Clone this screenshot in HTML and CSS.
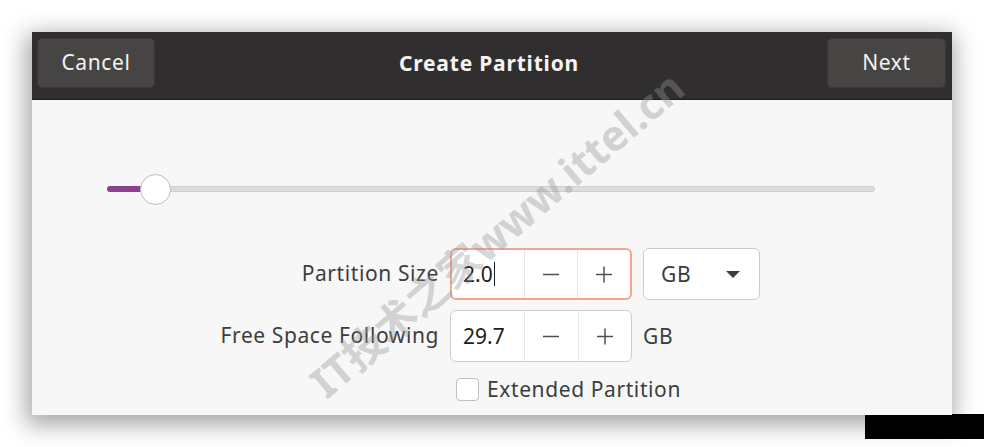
FILE: index.html
```html
<!DOCTYPE html>
<html lang="en">
<head>
    <meta charset="UTF-8">
    <meta name="viewport" content="width=device-width, initial-scale=1.0">
    <title>Create Partition</title>
    <link rel="stylesheet" href="styles.css">
</head>
<body>
    <div class="page">
        <div class="dialog">
            <div class="header">
                <button class="head_btn">Cancel</button>
                <div class="title">Create Partition</div>
                <button class="head_btn next_btn">Next</button>
            </div>
            <div class="content">
                <div class="slider">
                    <div class="track">
                        <div class="fill"></div>
                    </div>
                    <div class="thumb"></div>
                </div>
                <div class="form">
                    <label class="label">Partition Size</label>
                    <div class="spin focused">
                        <div class="spin_entry">2.0<span class="cursor"></span></div>
                        <div class="spin_btn">
                            <svg width="18" height="18" viewBox="0 0 18 18"><path d="M1 9.5h16" stroke="#505050" stroke-width="1.5"/></svg>
                        </div>
                        <div class="spin_btn">
                            <svg width="18" height="18" viewBox="0 0 18 18"><path d="M1 9.5h16M9 1.5v16" stroke="#505050" stroke-width="1.5"/></svg>
                        </div>
                    </div>
                    <div class="combo">
                        <span>GB</span>
                        <span class="arrow"></span>
                    </div>

                    <label class="label">Free Space Following</label>
                    <div class="spin">
                        <div class="spin_entry">29.7</div>
                        <div class="spin_btn">
                            <svg width="18" height="18" viewBox="0 0 18 18"><path d="M1 9.5h16" stroke="#505050" stroke-width="1.5"/></svg>
                        </div>
                        <div class="spin_btn">
                            <svg width="18" height="18" viewBox="0 0 18 18"><path d="M1 9.5h16M9 1.5v16" stroke="#505050" stroke-width="1.5"/></svg>
                        </div>
                    </div>
                    <div class="unit">GB</div>

                    <div></div>
                    <div class="check_row">
                        <span class="checkbox"></span>
                        <span>Extended Partition</span>
                    </div>
                </div>
            </div>
            <div class="watermark">IT技术之家www.ittel.cn</div>
        </div>
        <div class="footer">
            <div class="black_box"></div>
        </div>
    </div>
</body>
</html>
```

FILE: styles.css
```css
body {
    margin: 0;
    background: #ffffff;
    font-family: "Noto Sans", "Open Sans", sans-serif;
}

.page {
    width: 984px;
    height: 447px;
    padding: 32px 0 0 32px;
    box-sizing: border-box;
    overflow: hidden;
}

.dialog {
    position: relative;
    width: 920px;
    height: 383px;
    background: #f7f7f7;
    box-shadow: -2px 6px 22px 4px rgba(0, 0, 0, 0.35);
    overflow: hidden;
}

.header {
    display: flex;
    align-items: flex-start;
    justify-content: space-between;
    height: 67px;
    padding: 6px 6px 0 5px;
    box-sizing: border-box;
    background: #302e2e;
    border-bottom: 1px solid #1f1e1e;
    height: 68px;
}

.head_btn {
    width: 118px;
    height: 50px;
    border: 1px solid #3a3838;
    border-radius: 5px;
    background: #474544;
    color: #f3f2f1;
    font-family: "Noto Sans", sans-serif;
    font-size: 21px;
    letter-spacing: 0.6px;
    padding: 0 0 3px 0;
}

.next_btn {
    width: 119px;
}

.title {
    color: #f6f5f4;
    font-size: 21px;
    font-weight: bold;
    letter-spacing: 0.8px;
    line-height: 50px;
    margin-right: 4px;
    padding-bottom: 3px;
}

.content {
    padding: 74px 0 0 0;
}

.slider {
    position: relative;
    height: 31px;
    margin: 0 77px 0 75px;
}

.track {
    position: absolute;
    left: 0;
    right: 0;
    top: 12px;
    height: 6px;
    background: #dcdcdc;
    border: 1px solid #cfcfcf;
    box-sizing: border-box;
    border-radius: 3px;
}

.fill {
    width: 36px;
    height: 100%;
    background: #8a3f8f;
    border-radius: 3px 0 0 3px;
    margin: -1px 0 0 -1px;
    padding-bottom: 2px;
}

.thumb {
    position: absolute;
    left: 33px;
    top: 0;
    width: 31px;
    height: 31px;
    box-sizing: border-box;
    border-radius: 50%;
    background: #ffffff;
    border: 1px solid #bdbdbd;
}

.form {
    display: grid;
    grid-template-columns: 407px 182px 117px;
    grid-template-rows: 52px 52px 34px;
    column-gap: 11px;
    row-gap: 10px;
    margin-top: 43px;
    color: #3d3d3d;
    font-size: 21px;
    letter-spacing: 0.6px;
}

.label {
    display: flex;
    align-items: center;
    justify-content: flex-end;
    padding-bottom: 2px;
}

.spin {
    display: flex;
    background: #ffffff;
    border: 1px solid #cdcbc8;
    border-radius: 6px;
    overflow: hidden;
}

.spin.focused {
    border: 2px solid #f2a68c;
}

.spin_entry {
    display: flex;
    align-items: center;
    width: 73px;
    padding-left: 12px;
    box-sizing: border-box;
    color: #1c1c1c;
    letter-spacing: 0;
}

.focused .spin_entry {
    width: 72px;
    padding-left: 11px;
}

.cursor {
    display: inline-block;
    width: 1px;
    height: 24px;
    background: #1c1c1c;
    margin-left: 1px;
}

.spin_btn {
    display: flex;
    align-items: center;
    justify-content: center;
    flex: 1;
    border-left: 1px solid #e8e8e8;
}

.combo {
    display: flex;
    align-items: center;
    justify-content: space-between;
    padding: 0 19px 0 17px;
    background: #ffffff;
    border: 1px solid #cdcbc8;
    border-radius: 6px;
}

.arrow {
    width: 0;
    height: 0;
    border-left: 7px solid transparent;
    border-right: 7px solid transparent;
    border-top: 7px solid #3d3d3d;
}

.unit {
    display: flex;
    align-items: center;
}

.check_row {
    display: flex;
    align-items: center;
    grid-column: 2 / span 2;
    padding-left: 6px;
    white-space: nowrap;
}

.checkbox {
    width: 23px;
    height: 23px;
    box-sizing: border-box;
    border: 1px solid #c2c0bd;
    border-radius: 4px;
    background: #ffffff;
    margin-right: 8px;
}

.watermark {
    position: absolute;
    left: 463px;
    top: 200px;
    transform: translate(-50%, -50%) rotate(-40.5deg);
    white-space: nowrap;
    font-family: "Noto Sans", "Noto Sans CJK SC", sans-serif;
    font-size: 42px;
    font-weight: bold;
    color: rgba(150, 150, 150, 0.4);
    pointer-events: none;
}

.footer {
    display: flex;
    justify-content: flex-end;
    margin-top: -1px;
}

.black_box {
    width: 119px;
    height: 25px;
    background: #000000;
}
```
